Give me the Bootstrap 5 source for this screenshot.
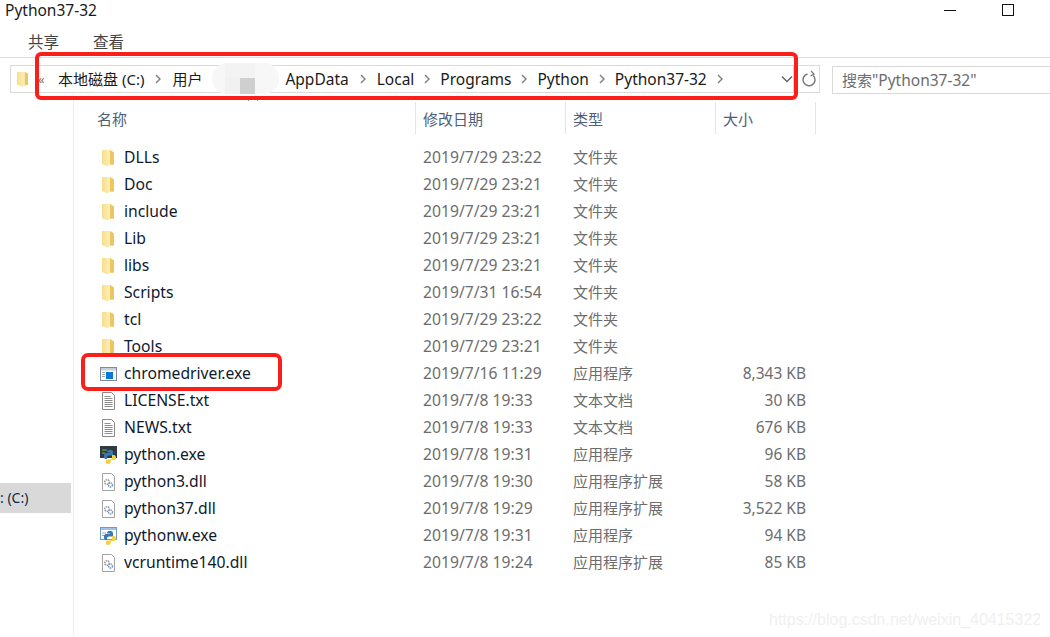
<!DOCTYPE html>
<html lang="zh">
<head>
<meta charset="utf-8">
<title>Python37-32</title>
<link href="https://cdn.jsdelivr.net/npm/bootstrap@5.3.0/dist/css/bootstrap.min.css" rel="stylesheet">
<style>
html,body{height:637px;overflow:hidden;background:#fff;}
body{position:relative;width:1050px;font-family:"Noto Sans","Noto Sans CJK SC",sans-serif;font-size:15px;color:#1a1a1a;line-height:20px;}
.title-row{height:20px;padding-left:5px;font-size:15.5px;}
.win-min{width:12px;height:1px;background:#111;margin-right:46px;}
.win-max{width:12px;height:12px;border:1px solid #111;margin-right:36px;}
.tab-row{height:38px;padding-left:28px;padding-top:12px;gap:34px;color:#444;font-size:15.5px;border-bottom:1px solid #dcdcdc;}
.addr-row{height:28px;margin-top:7px;padding:0 230px 0 10px;}
.addr-box{flex:1;border:1px solid #dadada;height:28px;padding-left:5px;font-size:15px;white-space:nowrap;}
.addr-ref{width:26px;height:28px;border:1px solid #dadada;border-left:0;padding-left:4px;}
.search-box{position:absolute;left:832px;top:66px;width:218px;height:28px;border:1px solid #dadada;border-right:0;color:#6d6d6d;padding-left:9px;font-size:15px;line-height:26px;}
.lat{font-size:15.5px;}
.crumbs-back{width:29px;color:#777;font-size:13px;padding-left:9px;}
.crumb-sep{width:28px;flex:none;}
.crumb-sep-n{width:26px;flex:none;}
.blur-blob{width:83px;height:28px;flex:none;position:relative;}
.blur-inner{position:absolute;left:10px;top:-2px;width:67px;height:31px;border-radius:15px;background:#f7f7f7;overflow:hidden;}
.blur-dark{position:absolute;left:28px;top:15px;width:15px;height:16px;background:#cfcfcf;}
.blur-low{position:absolute;left:13px;top:15px;width:15px;height:16px;background:#f1f1f1;}
.blur-mid{position:absolute;left:13px;top:0;width:30px;height:15px;background:#f3f3f3;}
.body-wrap{height:543px;margin-top:0;}
.side-pane{width:74px;flex:none;border-right:1px solid #efefef;position:relative;}
.side-sel{position:absolute;left:0;top:390px;width:71px;height:30px;background:#d9d9d9;color:#0d2a4a;line-height:30px;font-size:14px;white-space:nowrap;}
.main-pane{flex:1;position:relative;}
.head-row{height:32px;margin-top:9px;color:#4c607a;font-size:15px;line-height:34px;}
.col-n{width:342px;flex:none;padding-left:23px;border-right:1px solid #e4e4e4;}
.col-d{width:150px;flex:none;padding-left:7px;border-right:1px solid #e4e4e4;}
.col-t{width:150px;flex:none;padding-left:7px;border-right:1px solid #e4e4e4;}
.col-s{width:100px;flex:none;padding-left:7px;border-right:1px solid #e4e4e4;}
.file-list{margin-top:10px;}
.file-row{height:27px;line-height:27px;color:#6d6d6d;font-size:15px;}
.f-name{width:341px;flex:none;padding-left:26px;gap:7px;color:#0f1a2e;font-size:15.7px;}
.f-name svg{width:17px;height:18px;flex:none;}
.f-date{width:150px;flex:none;padding-left:8px;font-size:15.7px;}
.f-type{width:150px;flex:none;padding-left:8px;}
.f-size{width:91px;flex:none;text-align:right;font-size:15.5px;}
.sort-up{position:absolute;left:173px;top:2px;}
.red-a,.red-b{position:absolute;border:4px solid #fb1f1c;border-radius:6px;pointer-events:none;}
.red-a{left:35px;top:52px;width:763px;height:48px;}
.red-b{left:81px;top:353px;width:201px;height:38px;border-radius:7px;}
.wmark{position:absolute;left:769px;top:610px;color:#efefef;font-family:"Liberation Sans",sans-serif;font-size:16px;line-height:20px;white-space:nowrap;}
</style>
</head>
<body>
<svg width="0" height="0" class="position-absolute">
<defs>
<linearGradient id="fg" x1="0" x2="1" y1="0" y2="0"><stop offset="0" stop-color="#f7dc8c"/><stop offset=".6" stop-color="#fdeeb4"/><stop offset="1" stop-color="#f2d27a"/></linearGradient>
<symbol id="i-folder" viewBox="0 0 17 18"><path d="M2 1h8l4 2.500v12l-4 .5-2.500 1.500L2 15z" fill="url(#fg)"/><path d="M10 1l4 2.500v12h-4z" fill="#eec65f"/></symbol>
<symbol id="i-exe" viewBox="0 0 17 18"><rect x=".5" y="2.500" width="16" height="13" fill="#fff" stroke="#7f8a96"/><rect x="1" y="3" width="15" height="2.500" fill="#c5cdd6"/><rect x="6" y="7" width="7" height="7" fill="#0a78d7"/><path d="M2 7.500h3M2 9.500h3M2 11.500h3" stroke="#9aa5b0"/></symbol>
<symbol id="i-txt" viewBox="0 0 17 18"><path d="M2.500.5h9l3 3v14h-12z" fill="#fff" stroke="#8a8a8a"/><path d="M4.500 4.500h6M4.500 6.500h8M4.500 8.500h8M4.500 10.500h8M4.500 12.500h8M4.500 14.500h8" stroke="#8f8f8f"/></symbol>
<symbol id="i-dll" viewBox="0 0 17 18"><path d="M2.500.5h9l3 3v14h-12z" fill="#fff" stroke="#a3a3a3"/><circle cx="7" cy="9" r="2.300" fill="none" stroke="#a0a0a0" stroke-width="1.600" stroke-dasharray="1.500 .6"/><circle cx="10.500" cy="12" r="2" fill="none" stroke="#7c9cbd" stroke-width="1.500" stroke-dasharray="1.500 .6"/></symbol>
<symbol id="i-py" viewBox="0 0 17 18"><rect x="0" y="0" width="17" height="12" fill="#2f3b44"/><path d="M2 4h5M2 7h3" stroke="#7fae6f"/><path d="M7 6.500c0-2 1-2.500 3-2.500s3 .5 3 2.500v3H9c-1.500 0-2 1-2 2v1.500H5.500C4 13 4 11.500 4 10s.5-3 2-3h4v-.5z" fill="#3a78b0"/><path d="M14 9c1.500 0 2 1.500 2 2.500S15.500 14 14 14h-3v1c0 2-1 3-3 3s-2-1-2-2v-2.500h4c1.500 0 2-.5 2-2V9z" fill="#f6cf43"/></symbol>
<symbol id="i-pyw" viewBox="0 0 17 18"><rect x=".5" y=".5" width="16" height="12" fill="#fff" stroke="#6f9ac4"/><rect x="1" y="1" width="15" height="2" fill="#9fc3e6"/><path d="M2 6h4M2 8.500h3" stroke="#9aa5b0"/><path d="M7 6.500c0-2 1-2.500 3-2.500s3 .5 3 2.500v3H9c-1.500 0-2 1-2 2v1.500H5.500C4 13 4 11.500 4 10s.5-3 2-3h4v-.5z" fill="#3a78b0"/><path d="M14 9c1.500 0 2 1.500 2 2.500S15.500 14 14 14h-3v1c0 2-1 3-3 3s-2-1-2-2v-2.500h4c1.500 0 2-.5 2-2V9z" fill="#f6cf43"/></symbol>
<symbol id="i-chev" viewBox="0 0 8 12"><path d="M2 2l4 4-4 4" fill="none" stroke="#7d7d7d" stroke-width="1.400"/></symbol>
</defs>
</svg>

<div class="title-row d-flex align-items-center justify-content-between">
  <span>Python37-32</span>
  <div class="d-flex align-items-center"><div class="win-min"></div><div class="win-max"></div></div>
</div>
<div class="tab-row d-flex"><span>共享</span><span>查看</span></div>
<div class="addr-row d-flex">
  <div class="addr-box d-flex align-items-center">
    <svg width="13" height="17" viewBox="0 0 13 17" class="flex-none"><path d="M1 1h8l3 2v11l-3 .5-2 1.500-6-2.500z" fill="url(#fg)"/><path d="M9 1l3 2v11H9z" fill="#eec65f"/></svg>
    <span class="crumbs-back">«</span>
    <span>本地磁盘 (C:)</span>
    <span class="crumb-sep d-flex justify-content-center"><svg width="8" height="12"><use href="#i-chev"/></svg></span>
    <span>用户</span>
    <span class="blur-blob"><span class="blur-inner"><span class="blur-mid"></span><span class="blur-low"></span><span class="blur-dark"></span></span></span>
    <span class="lat">AppData</span>
    <span class="crumb-sep d-flex justify-content-center"><svg width="8" height="12"><use href="#i-chev"/></svg></span>
    <span class="lat">Local</span>
    <span class="crumb-sep-n d-flex justify-content-center"><svg width="8" height="12"><use href="#i-chev"/></svg></span>
    <span class="lat">Programs</span>
    <span class="crumb-sep-n d-flex justify-content-center"><svg width="8" height="12"><use href="#i-chev"/></svg></span>
    <span class="lat">Python</span>
    <span class="crumb-sep-n d-flex justify-content-center"><svg width="8" height="12"><use href="#i-chev"/></svg></span>
    <span class="lat">Python37-32</span>
    <span class="crumb-sep-n d-flex justify-content-center"><svg width="8" height="12"><use href="#i-chev"/></svg></span>
    <svg width="12" height="8" viewBox="0 0 12 8" class="ms-auto"><path d="M1 1.500 6 6.500l5-5" fill="none" stroke="#666" stroke-width="1.500"/></svg>
  </div>
  <div class="addr-ref d-flex align-items-center justify-content-center">
    <svg width="16" height="18" viewBox="0 0 16 18"><path d="M5 4.500A6 6 0 1 0 11 4.500" fill="none" stroke="#7a7a7a" stroke-width="1.500" transform="rotate(15 8 10)"/><path d="M3 2l3 3-3.500 2" fill="none" stroke="#7a7a7a" stroke-width="1.300" transform="translate(7 -1)"/></svg>
  </div>
</div>
<div class="search-box">搜索<span class="lat">"Python37-32"</span></div>

<div class="body-wrap d-flex">
  <div class="side-pane"><div class="side-sel">: (C:)</div></div>
  <div class="main-pane">
    <svg class="sort-up" width="12" height="7" viewBox="0 0 12 7"><path d="M1 6l5-5 5 5" fill="none" stroke="#9a9a9a"/></svg>
    <div class="head-row d-flex">
      <div class="col-n">名称</div><div class="col-d">修改日期</div><div class="col-t">类型</div><div class="col-s">大小</div>
    </div>
    <div class="file-list">
      <div class="file-row d-flex"><div class="f-name d-flex align-items-center"><svg><use href="#i-folder"/></svg>DLLs</div><div class="f-date">2019/7/29 23:22</div><div class="f-type">文件夹</div><div class="f-size"></div></div>
      <div class="file-row d-flex"><div class="f-name d-flex align-items-center"><svg><use href="#i-folder"/></svg>Doc</div><div class="f-date">2019/7/29 23:21</div><div class="f-type">文件夹</div><div class="f-size"></div></div>
      <div class="file-row d-flex"><div class="f-name d-flex align-items-center"><svg><use href="#i-folder"/></svg>include</div><div class="f-date">2019/7/29 23:21</div><div class="f-type">文件夹</div><div class="f-size"></div></div>
      <div class="file-row d-flex"><div class="f-name d-flex align-items-center"><svg><use href="#i-folder"/></svg>Lib</div><div class="f-date">2019/7/29 23:21</div><div class="f-type">文件夹</div><div class="f-size"></div></div>
      <div class="file-row d-flex"><div class="f-name d-flex align-items-center"><svg><use href="#i-folder"/></svg>libs</div><div class="f-date">2019/7/29 23:21</div><div class="f-type">文件夹</div><div class="f-size"></div></div>
      <div class="file-row d-flex"><div class="f-name d-flex align-items-center"><svg><use href="#i-folder"/></svg>Scripts</div><div class="f-date">2019/7/31 16:54</div><div class="f-type">文件夹</div><div class="f-size"></div></div>
      <div class="file-row d-flex"><div class="f-name d-flex align-items-center"><svg><use href="#i-folder"/></svg>tcl</div><div class="f-date">2019/7/29 23:22</div><div class="f-type">文件夹</div><div class="f-size"></div></div>
      <div class="file-row d-flex"><div class="f-name d-flex align-items-center"><svg><use href="#i-folder"/></svg>Tools</div><div class="f-date">2019/7/29 23:21</div><div class="f-type">文件夹</div><div class="f-size"></div></div>
      <div class="file-row d-flex"><div class="f-name d-flex align-items-center"><svg><use href="#i-exe"/></svg>chromedriver.exe</div><div class="f-date">2019/7/16 11:29</div><div class="f-type">应用程序</div><div class="f-size">8,343 KB</div></div>
      <div class="file-row d-flex"><div class="f-name d-flex align-items-center"><svg><use href="#i-txt"/></svg>LICENSE.txt</div><div class="f-date">2019/7/8 19:33</div><div class="f-type">文本文档</div><div class="f-size">30 KB</div></div>
      <div class="file-row d-flex"><div class="f-name d-flex align-items-center"><svg><use href="#i-txt"/></svg>NEWS.txt</div><div class="f-date">2019/7/8 19:33</div><div class="f-type">文本文档</div><div class="f-size">676 KB</div></div>
      <div class="file-row d-flex"><div class="f-name d-flex align-items-center"><svg><use href="#i-py"/></svg>python.exe</div><div class="f-date">2019/7/8 19:31</div><div class="f-type">应用程序</div><div class="f-size">96 KB</div></div>
      <div class="file-row d-flex"><div class="f-name d-flex align-items-center"><svg><use href="#i-dll"/></svg>python3.dll</div><div class="f-date">2019/7/8 19:30</div><div class="f-type">应用程序扩展</div><div class="f-size">58 KB</div></div>
      <div class="file-row d-flex"><div class="f-name d-flex align-items-center"><svg><use href="#i-dll"/></svg>python37.dll</div><div class="f-date">2019/7/8 19:29</div><div class="f-type">应用程序扩展</div><div class="f-size">3,522 KB</div></div>
      <div class="file-row d-flex"><div class="f-name d-flex align-items-center"><svg><use href="#i-pyw"/></svg>pythonw.exe</div><div class="f-date">2019/7/8 19:31</div><div class="f-type">应用程序</div><div class="f-size">94 KB</div></div>
      <div class="file-row d-flex"><div class="f-name d-flex align-items-center"><svg><use href="#i-dll"/></svg>vcruntime140.dll</div><div class="f-date">2019/7/8 19:24</div><div class="f-type">应用程序扩展</div><div class="f-size">85 KB</div></div>
    </div>
  </div>
</div>
<div class="red-a"></div>
<div class="red-b"></div>
<div class="wmark">https://blog.csdn.net/weixin_40415322</div>
</body>
</html>
